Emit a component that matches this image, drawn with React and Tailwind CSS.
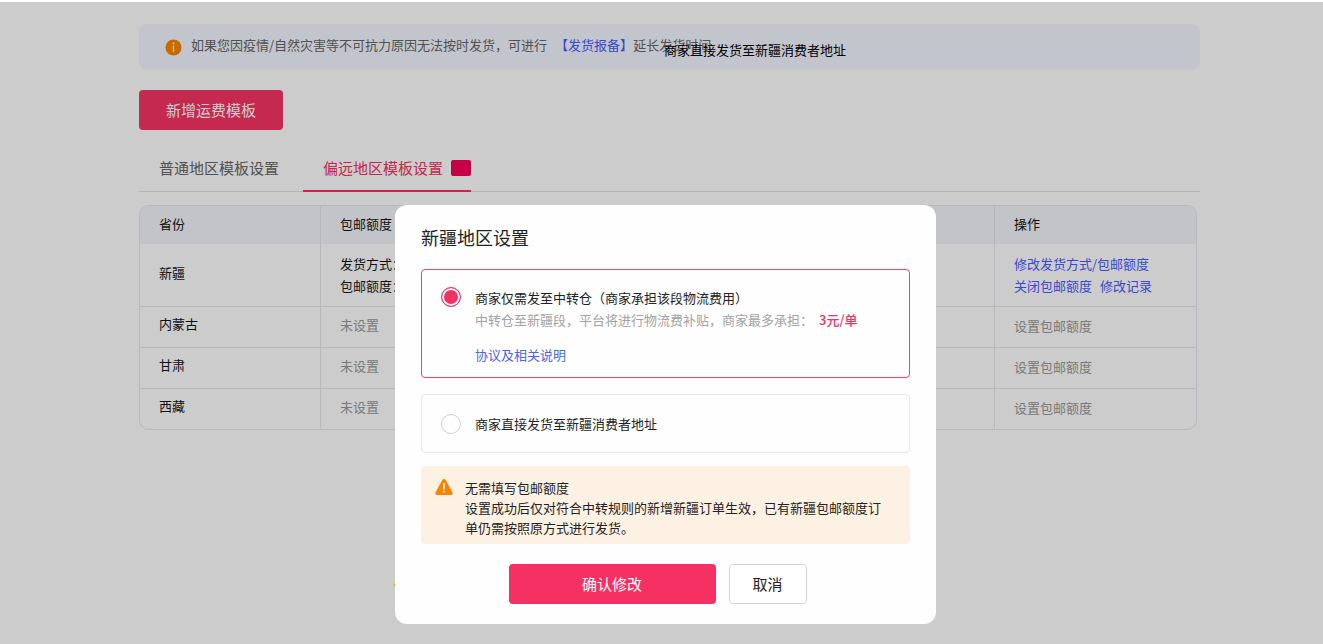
import { useState } from 'react'

const tabs = [
  { id: 'normal', label: '普通地区模板设置' },
  { id: 'remote', label: '偏远地区模板设置', tag: true },
]

const regions = ['内蒙古', '甘肃', '西藏']

const InfoIcon = () => (
  <svg viewBox="0 0 18 18" className="w-[17px] h-[17px] shrink-0" aria-hidden="true">
    <circle cx="9" cy="9" r="8.5" fill="#fb8500" />
    <circle cx="9" cy="4.7" r="1" fill="#f4f7ff" />
    <rect x="8.3" y="6.8" width="1.4" height="7.2" fill="#f4f7ff" />
  </svg>
)

const WarningIcon = () => (
  <svg viewBox="0 0 18 18" className="w-[18px] h-[18px] shrink-0" aria-hidden="true">
    <path
      d="M7.3 1.9c.8-1.3 2.6-1.3 3.4 0l6.7 12.3c.8 1.4 0 2.8-1.4 2.8H2c-1.4 0-2.2-1.4-1.4-2.8z"
      fill="#fb8200"
    />
    <rect x="8.1" y="5" width="1.8" height="6.4" rx="0.8" fill="#fdf1e4" />
    <circle cx="9" cy="13.6" r="1.1" fill="#fdf1e4" />
  </svg>
)

const Radio = ({ id, checked, onChange }) => (
  <input
    type="radio"
    name="delivery"
    id={id}
    checked={checked}
    onChange={onChange}
    className="appearance-none w-5 h-5 shrink-0 rounded-full border border-[#cfcfd2] bg-white checked:border-[#f43162] checked:bg-[#f43162] checked:shadow-[inset_0_0_0_2px_#fff]"
  />
)

const Notice = () => (
  <div className="relative flex items-center gap-[9px] h-[46px] px-[26px] rounded-lg bg-[#f4f7ff] text-[#666] whitespace-nowrap">
    <InfoIcon />
    <p className="pb-1">
      如果您因疫情/自然灾害等不可抗力原因无法按时发货，可进行
      <a href="#report" className="ml-2 text-[#4a59ff]">【发货报备】</a>
      延长发货时间
    </p>
    <span className="absolute left-[525px] top-4 text-black">商家直接发货至新疆消费者地址</span>
  </div>
)

const Tabs = ({ active, onSelect }) => (
  <nav className="flex h-[42px] mt-5 border-b border-[#e4e4e6] text-[15px]">
    {tabs.map((tab) => (
      <button
        key={tab.id}
        type="button"
        onClick={() => onSelect(tab.id)}
        className={`flex items-center gap-2 -mb-px pl-5 pb-1 border-b-2 ${tab.tag ? '' : 'pr-6'} ${
          active === tab.id ? 'border-[#f43162] text-[#f43162]' : 'border-transparent text-[#666]'
        }`}
      >
        {tab.label}
        {tab.tag && <span className="w-5 h-4 rounded-xs bg-[#f90058]" />}
      </button>
    ))}
  </nav>
)

const RegionTable = () => (
  <div className="mt-[13px] mr-[3px] rounded-[10px] border border-[#e6e6ee] overflow-hidden">
    <table className="w-full table-fixed border-separate border-spacing-0 text-left text-[#151515] leading-[22px]">
      <colgroup>
        <col className="w-[180px]" />
        <col />
        <col className="w-[202px]" />
      </colgroup>
      <thead>
        <tr className="h-[38px] bg-[#f4f5fb]">
          <th className="pl-[19px] pb-0.5 font-normal">省份</th>
          <th className="pl-[19px] pb-0.5 font-normal border-l border-[#e4e5ee]">包邮额度</th>
          <th className="pl-[19px] pb-0.5 font-normal border-l border-[#e4e5ee]">操作</th>
        </tr>
      </thead>
      <tbody>
        <tr className="h-[62px]">
          <td className="pl-[19px] pb-1">新疆</td>
          <td className="pl-[19px] border-l border-[#e6e6ee]">
            发货方式：
            <br />
            包邮额度：
          </td>
          <td className="pl-[19px] border-l border-[#e6e6ee] text-[#4a59ff]">
            <a href="#edit">修改发货方式/包邮额度</a>
            <div className="flex gap-2">
              <a href="#close">关闭包邮额度</a>
              <a href="#log">修改记录</a>
            </div>
          </td>
        </tr>
        {regions.map((region) => (
          <tr key={region} className="h-[41px]">
            <td className="pl-[19px] pb-1.5 border-t border-[#e6e6ea]">{region}</td>
            <td className="pl-[19px] pb-1 border-t border-l border-[#e6e6ea] text-[#999]">未设置</td>
            <td className="pl-[19px] pb-0.5 border-t border-l border-[#e6e6ea] text-[#999]">
              <a href="#set">设置包邮额度</a>
            </td>
          </tr>
        ))}
      </tbody>
    </table>
  </div>
)

const SettingsDialog = () => {
  const [delivery, setDelivery] = useState('transfer')

  return (
    <div
      role="dialog"
      aria-labelledby="dialog-title"
      className="w-[541px] px-[26px] pt-[18px] pb-5 rounded-xl bg-[#fefefe] text-[#222]"
    >
      <h2 id="dialog-title" className="text-[18px] leading-7">新疆地区设置</h2>

      <div
        className={`flex gap-3.5 mt-[18px] pt-[17px] pb-[11px] px-[19px] rounded-sm border leading-[22px] ${
          delivery === 'transfer' ? 'border-[#f4416c]' : 'border-[#e6e6ee]'
        }`}
      >
        <Radio id="transfer" checked={delivery === 'transfer'} onChange={() => setDelivery('transfer')} />
        <div>
          <label htmlFor="transfer" className="block">商家仅需发至中转仓（商家承担该段物流费用）</label>
          <p className="text-[#a3a3a3]">
            中转仓至新疆段，平台将进行物流费补贴，商家最多承担：
            <strong className="ml-1.5 font-medium text-[#f43162]">3元/单</strong>
          </p>
          <a href="#agreement" className="block mt-[13px] text-[#4a63f5]">协议及相关说明</a>
        </div>
      </div>

      <div
        className={`flex items-center gap-3.5 h-[59px] mt-4 px-[19px] rounded-sm border ${
          delivery === 'direct' ? 'border-[#f4416c]' : 'border-[#e6e6ee]'
        }`}
      >
        <Radio id="direct" checked={delivery === 'direct'} onChange={() => setDelivery('direct')} />
        <label htmlFor="direct">商家直接发货至新疆消费者地址</label>
      </div>

      <div className="flex gap-3 mt-[13px] pt-3 pb-1.5 pl-3.5 pr-5 rounded-sm bg-[#fdf1e4] leading-5">
        <WarningIcon />
        <p>
          无需填写包邮额度
          <br />
          设置成功后仅对符合中转规则的新增新疆订单生效，已有新疆包邮额度订单仍需按照原方式进行发货。
        </p>
      </div>

      <div className="flex justify-center gap-[13px] mt-5 pr-4 text-[15px]">
        <button type="button" className="w-[207px] h-10 rounded-sm bg-[#f43162] text-white">确认修改</button>
        <button type="button" className="w-[78px] h-10 rounded-sm border border-[#d2d2dc] bg-white">取消</button>
      </div>
    </div>
  )
}

const App = () => {
  const [tab, setTab] = useState('remote')

  return (
    <div
      lang="zh-CN"
      className="min-h-screen pt-0.5 bg-white text-[13px] leading-5 font-['Noto_Sans_CJK_SC',sans-serif]"
    >
      <main className="pt-[22px] pl-[139px] pr-[123px]">
        <Notice />
        <button type="button" className="w-36 h-10 mt-5 rounded-sm bg-[#f73463] text-[15px] text-white">
          新增运费模板
        </button>
        <Tabs active={tab} onSelect={setTab} />
        <RegionTable />
      </main>

      {/* Mask and dialog */}
      <div className="fixed inset-x-0 top-0.5 bottom-0 flex items-end justify-center pl-2 pb-5 bg-black/20">
        <div className="relative">
          <span className="absolute -left-px bottom-[37px] w-1 h-1 rounded-full bg-[#f59a00]" />
          <div className="relative">
            <SettingsDialog />
          </div>
        </div>
      </div>
    </div>
  )
}

export default App
